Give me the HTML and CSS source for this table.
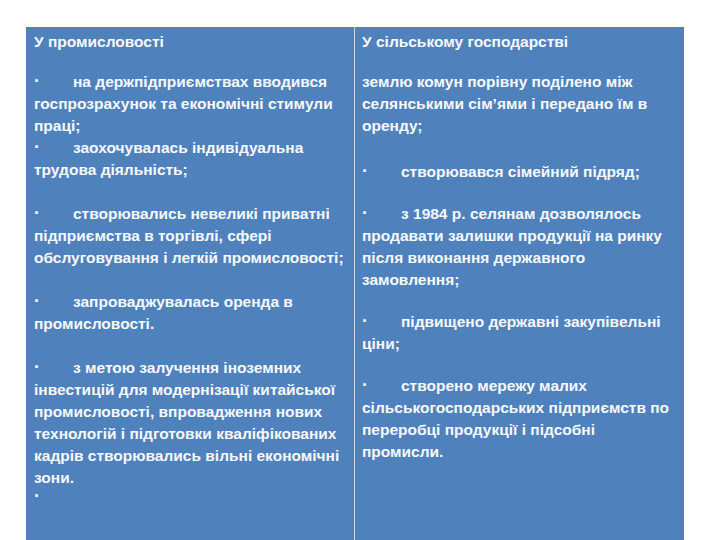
FILE: index.html
```html
<!DOCTYPE html>
<html lang="uk">
<head>
<meta charset="utf-8">
<link rel="stylesheet" href="styles.css">
</head>
<body>
<div class="table">
  <div class="cell left">
    <div class="head">У промисловості</div>
    <p class="p1"><span class="b">·</span>на держпідприємствах вводився<br>госпрозрахунок та економічні стимули<br>праці;</p>
    <p class="p0"><span class="b">·</span>заохочувалась індивідуальна<br>трудова діяльність;</p>
    <p class="pg"><span class="b">·</span>створювались невеликі приватні<br>підприємства в торгівлі, сфері<br>обслуговування і легкій промисловості;</p>
    <p class="pg"><span class="b">·</span>запроваджувалась оренда в<br>промисловості.</p>
    <p class="pg"><span class="b">·</span>з метою залучення іноземних<br>інвестицій для модернізації китайської<br>промисловості, впровадження нових<br>технологій і підготовки кваліфікованих<br>кадрів створювались вільні економічні<br>зони.</p>
    <p class="tail">·</p>
  </div>
  <div class="divider"></div>
  <div class="cell right">
    <div class="head">У сільському господарстві</div>
    <p class="p1">землю комун порівну поділено між<br>селянськими сім’ями і передано їм в<br>оренду;</p>
    <p class="r2"><span class="b">·</span>створювався сімейний підряд;</p>
    <p class="r3"><span class="b">·</span>з 1984 р. селянам дозволялось<br>продавати залишки продукції на ринку<br>після виконання державного<br>замовлення;</p>
    <p class="r3"><span class="b">·</span>підвищено державні закупівельні<br>ціни;</p>
    <p class="r3"><span class="b">·</span>створено мережу малих<br>сільськогосподарських підприємств по<br>переробці продукції і підсобні<br>промисли.</p>
  </div>
</div>
</body>
</html>
```

FILE: styles.css
```css
html, body {
  margin: 0;
  padding: 0;
  background: #ffffff;
  height: 540px;
  overflow: hidden;
}
.table {
  margin: 27px 0 0 26px;
  width: 658px;
  height: 520px;
  display: grid;
  grid-template-columns: 328px 1px 329px;
  background: #4f81bd;
  font-family: "Liberation Sans", Arial, sans-serif;
  font-weight: bold;
  font-size: 15.5px;
  line-height: 22px;
  color: #f7f9fc;
}
.divider {
  background: #c9d7ea;
}
.cell {
  padding: 4px 8px 0 8px;
  white-space: nowrap;
}
.right {
  padding-left: 7px;
}
.cell p {
  margin: 0;
}
.head {
  height: 22px;
}
.p1 { margin-top: 18px !important; }
.p0 { margin-top: 0; }
.pg { margin-top: 22px !important; }
.r2 { margin-top: 24px !important; }
.r3 { margin-top: 20px !important; }
.tail {
  line-height: 14px;
  margin-top: 0;
  font-size: 18px;
}
.b {
  display: inline-block;
  width: 39px;
  font-size: 18px;
  line-height: 0;
}
```
